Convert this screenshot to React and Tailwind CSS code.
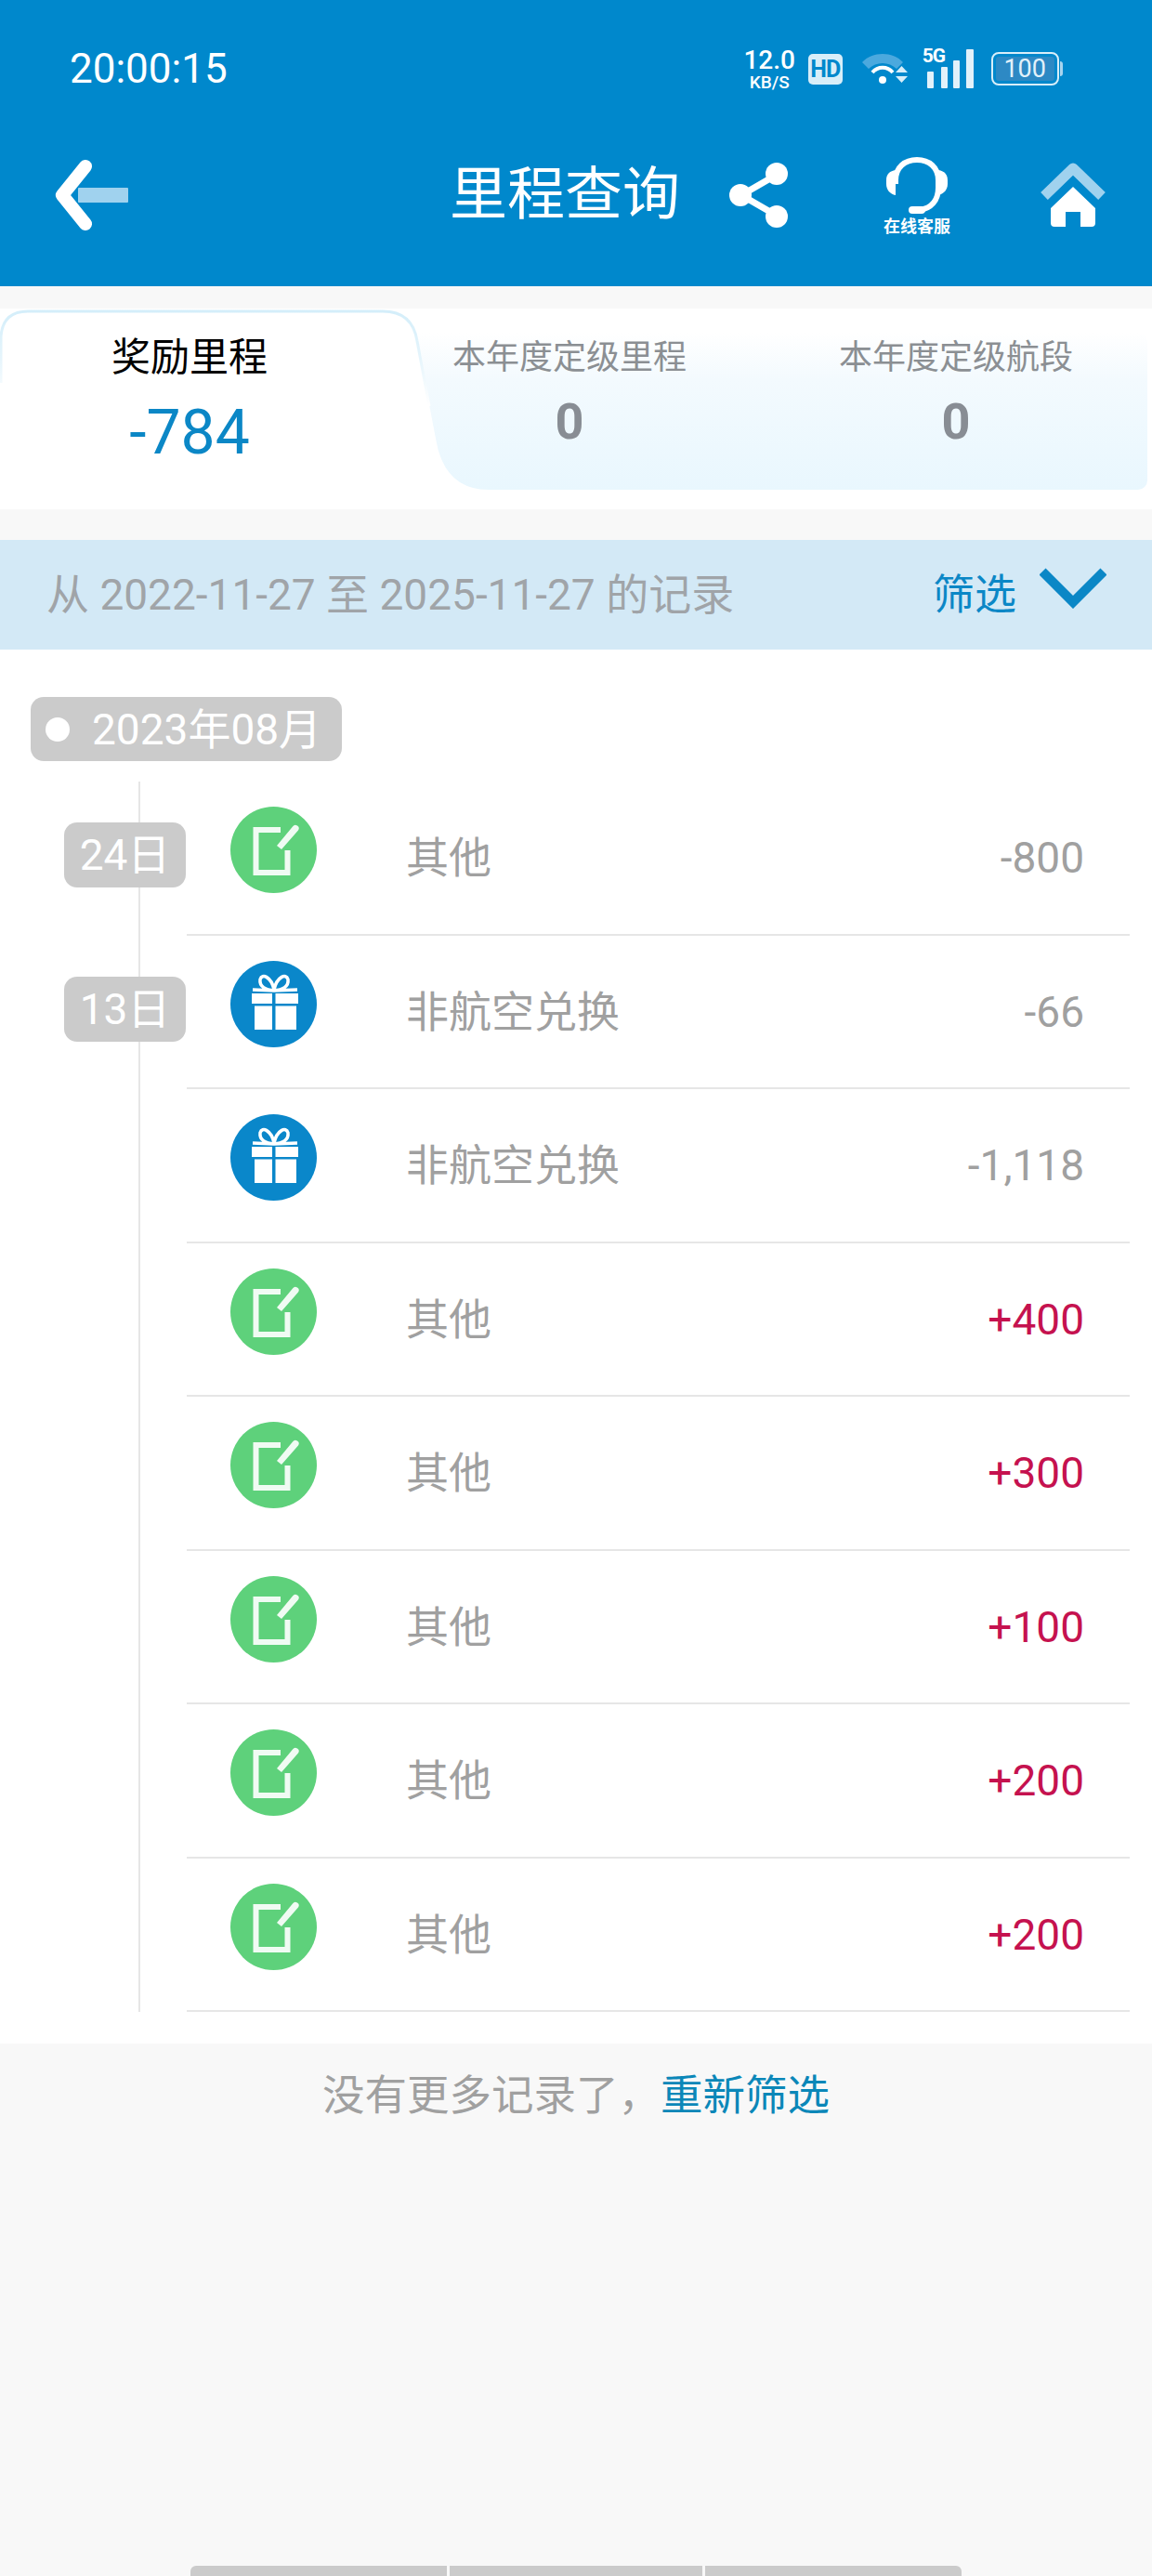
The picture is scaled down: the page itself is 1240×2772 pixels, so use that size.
import React from "react";

const rows = [
  { day: "24日", kind: "note", name: "其他", amount: "-800" },
  { day: "13日", kind: "gift", name: "非航空兑换", amount: "-66" },
  { kind: "gift", name: "非航空兑换", amount: "-1,118" },
  { kind: "note", name: "其他", amount: "+400" },
  { kind: "note", name: "其他", amount: "+300" },
  { kind: "note", name: "其他", amount: "+100" },
  { kind: "note", name: "其他", amount: "+200" },
  { kind: "note", name: "其他", amount: "+200" },
];

function NoteIcon() {
  return (
    <svg width="93" height="93" viewBox="0 0 93 93" className="shrink-0">
      <circle cx="46.5" cy="46.5" r="46.5" fill="#5ed17b" />
      <path d="M54 25H27.5V71H61.5V47" fill="none" stroke="#f0fbf3" strokeWidth="6" />
      <path d="M50 42L67 21.5a3.5 3.5 0 0 1 6 4L55 46Z" fill="#f0fbf3" />
    </svg>
  );
}

function GiftIcon() {
  return (
    <svg width="93" height="93" viewBox="0 0 93 93" className="shrink-0">
      <circle cx="46.5" cy="46.5" r="46.5" fill="#0a87ca" />
      <path d="M23 35H45V46H23ZM48.500 35H73V46H48.500ZM26 48.500H45V74H26ZM48.500 48.500H71V74H48.500Z" fill="#fff" />
      <path d="M47 32C38 31 31 28 32 20C34 13 44 17 47 31C50 17 60 13 62 20C63 28 56 31 47 32ZM47 32L24 31M47 32L72 31" fill="none" stroke="#fff" strokeWidth="3.500" />
    </svg>
  );
}

function Row({ row }) {
  const positive = row.amount.startsWith("+");
  return (
    <div className="flex h-[165.5px]">
      <div className="relative w-[201px] shrink-0">
        <div className="h-full w-[151px] border-r-2 border-[#e6e6e6]" />
        {row.day && (
          <span className="absolute left-[69px] top-[44px] flex h-[70px] w-[131px] items-center justify-center rounded-[14px] bg-[#cbcbcb] text-[46px] leading-none text-white">
            {row.day}
          </span>
        )}
      </div>
      <div className="mr-[24px] flex flex-1 border-b-2 border-[#e6e6e6]">
        <div className="ml-[47px] mt-[27px]">
          {row.kind === "note" ? <NoteIcon /> : <GiftIcon />}
        </div>
        <span className="ml-[96px] mt-[1px] self-center text-[46px] leading-none text-[#a0a0a0]">{row.name}</span>
        <span className={`ml-auto mr-[49px] mt-[1px] self-center text-[46px] leading-none ${positive ? "text-[#c5124f]" : "text-[#a0a0a0]"}`}>
          {row.amount}
        </span>
      </div>
    </div>
  );
}

function StatusBar() {
  return (
    <div className="flex h-[150px] items-center pl-[75px] pb-[2px] text-white">
      <span className="text-[44px] leading-none">20:00:15</span>
      <div className="ml-[557px] flex w-[53px] flex-col items-center font-medium">
        <span className="text-[28px] leading-[28px]">12.0</span>
        <span className="text-[19px] leading-[19px]">KB/S</span>
      </div>
      <span className="ml-[15px] flex h-[33px] w-[37px] items-center justify-center rounded-[5px] bg-[#d8eef9] text-[25px] font-bold leading-none tracking-[-1px] text-[#0088cc]">
        HD
      </span>
      <svg width="52" height="40" viewBox="0 0 52 40" className="ml-[19px]">
        <path d="M2 13C13 1 35 1 46 13L39 20C31 12 17 12 9 20Z" fill="#4ba9de" />
        <path d="M13 24C19 17 29 17 35 24" fill="none" stroke="#fff" strokeWidth="4" />
        <circle cx="24" cy="32" r="4" fill="#fff" />
        <path d="M38 24L44.500 17L51 24ZM38 28H51L44.500 35Z" fill="#d8eef9" />
      </svg>
      <div className="relative ml-[15px] h-[42px] w-[55px]">
        <span className="absolute -top-[3px] left-0 text-[21px] font-bold leading-none tracking-[-1px]">5G</span>
        <svg width="55" height="42" viewBox="0 0 55 42">
          <rect x="5" y="24" width="7" height="18" rx="1" fill="#e2f1fa" />
          <rect x="20" y="19" width="7" height="23" rx="1" fill="#e2f1fa" />
          <rect x="33" y="12" width="7" height="30" rx="1" fill="#e2f1fa" />
          <rect x="47" y="0" width="8" height="42" rx="1" fill="#e2f1fa" />
        </svg>
      </div>
      <div className="ml-[19px] flex items-center">
        <div className="flex h-[36px] w-[73px] items-center justify-center rounded-[8px] border-2 border-[#d8eef9] p-[3px]">
          <span className="flex h-full w-full items-center justify-center rounded-[3px] bg-[#2d89c4] text-[27px] leading-none text-[#e2f1fa]">100</span>
        </div>
        <span className="ml-[1px] h-[16px] w-[3px] rounded-r bg-[#a9d5ee]" />
      </div>
    </div>
  );
}

function NavBar() {
  return (
    <div className="flex h-[158px] items-start pt-[22px] text-white">
      <svg width="80" height="76" viewBox="0 0 80 76" className="ml-[58px] shrink-0">
        <rect x="26" y="30" width="54" height="16" rx="1" fill="#a0d2ee" />
        <path d="M34 7L9 38L34 69" fill="none" stroke="#fff" strokeWidth="14" strokeLinecap="round" strokeLinejoin="round" />
      </svg>
      <span className="ml-[346px] text-[62px] leading-[76px]">里程查询</span>
      <svg width="64" height="70" viewBox="0 0 64 70" className="ml-[53px] mt-[3px] shrink-0">
        <path d="M51 13L13 35L51 57" fill="none" stroke="#fff" strokeWidth="7" />
        <circle cx="51" cy="12" r="12" fill="#fff" />
        <circle cx="12" cy="35" r="12" fill="#fff" />
        <circle cx="51" cy="58" r="12" fill="#fff" />
      </svg>
      <div className="ml-[101px] -mt-[4px] flex w-[74px] shrink-0 flex-col items-center">
        <svg width="70" height="64" viewBox="0 0 70 64">
          <path d="M12 30V26C12 12 22 4 35 4C48 4 58 12 58 26V34C58 48 50 56 38 58" fill="none" stroke="#fff" strokeWidth="6" />
          <path d="M2 26C2 19 6 16 12 15V42C6 41 2 36 2 30ZM68 26C68 19 64 16 58 15V42C64 41 68 36 68 30Z" fill="#fff" />
          <rect x="26" y="54" width="18" height="8" rx="4" fill="#fff" />
        </svg>
        <span className="mt-[1px] whitespace-nowrap text-[18px] font-bold leading-[22px]">在线客服</span>
      </div>
      <svg width="72" height="70" viewBox="0 0 72 70" className="ml-[95px] mt-[3px] shrink-0">
        <path d="M5 36L36 6L67 36" fill="none" stroke="#a0d2ee" strokeWidth="11" strokeLinejoin="round" />
        <path d="M36 26L60 49V65a4 4 0 0 1-4 4H44V53H28V69H16a4 4 0 0 1-4-4V49Z" fill="#fff" />
      </svg>
    </div>
  );
}

function Tabs() {
  return (
    <div className="relative h-[216px] bg-white">
      <svg width="1240" height="216" viewBox="0 0 1240 216" className="absolute inset-0">
        <defs>
          <linearGradient id="tabFill" x1="0" y1="0" x2="0" y2="1">
            <stop offset="0" stopColor="#ffffff" />
            <stop offset="0.3" stopColor="#f3fafe" />
            <stop offset="1" stopColor="#e9f7fe" />
          </linearGradient>
          <linearGradient id="tabEdge" x1="0" y1="0" x2="0" y2="1">
            <stop offset="0" stopColor="#d4eefa" />
            <stop offset="0.5" stopColor="#e6f5fc" />
            <stop offset="1" stopColor="#ffffff" />
          </linearGradient>
        </defs>
        <rect x="300" y="26" width="935" height="169" rx="10" fill="url(#tabFill)" />
        <path d="M0 216V30Q2 3 30 3H412Q444 3 449 35L469 140Q478 195 526 195V216Z" fill="#ffffff" />
        <path d="M1 80V30Q3 3 30 3H412Q444 3 449 35L462 105" fill="none" stroke="url(#tabEdge)" strokeWidth="3" />
      </svg>
      <div className="relative grid h-full grid-cols-[408px_410px_1fr] text-center">
        <div className="flex flex-col items-center pt-[28px]">
          <span className="mt-[2px] text-[42px] leading-[46px] text-black">奖励里程</span>
          <span className="mt-[20px] text-[66px] leading-[76px] text-[#0b87c6]">-784</span>
        </div>
        <div className="flex flex-col items-center pt-[32px]">
          <span className="text-[36px] leading-[42px] text-[#8b8f93]">本年度定级里程</span>
          <span className="mt-[18px] text-[54px] font-bold leading-[60px] text-[#888d94]">0</span>
        </div>
        <div className="flex flex-col items-center pt-[32px]">
          <span className="text-[36px] leading-[42px] text-[#8b8f93]">本年度定级航段</span>
          <span className="mt-[18px] text-[54px] font-bold leading-[60px] text-[#888d94]">0</span>
        </div>
      </div>
    </div>
  );
}

export default function App() {
  return (
    <div className="flex h-[2772px] w-[1240px] flex-col overflow-hidden bg-[#f8f8f8] font-['Roboto','Noto_Sans_CJK_SC',sans-serif]">
      <header className="bg-[#0088cc]">
        <StatusBar />
        <NavBar />
      </header>

      <div className="mt-[24px]">
        <Tabs />
      </div>

      <div className="mt-[33px] flex h-[118px] items-center bg-[#d3e9f6] pl-[50px] text-[46px] leading-none">
        <span className="text-[#a0a4a8]">从 2022-11-27 至 2025-11-27 的记录</span>
        <span className="ml-auto text-[45px] text-[#0b87c6]">筛选</span>
        <svg width="72" height="44" viewBox="0 0 72 44" className="ml-[25px] mr-[49px] -mt-[14px]">
          <path d="M3 4L36 37L69 4" fill="none" stroke="#0b87c6" strokeWidth="10" />
        </svg>
      </div>

      <div className="bg-white pb-[34px]">
        <div className="pl-[33px] pt-[51px] pb-[22px]">
          <div className="flex h-[69px] w-[335px] items-center rounded-[14px] bg-[#cbcbcb] text-[46px] leading-none text-white">
            <span className="ml-[16px] h-[26px] w-[26px] rounded-full bg-white" />
            <span className="ml-[24px]">2023年08月</span>
          </div>
        </div>
        {rows.map((row, i) => (
          <Row key={i} row={row} />
        ))}
      </div>

      <div className="flex flex-1 flex-col items-center">
        <p className="mt-[32px] text-[45.500px] leading-[50px] text-[#a0a0a0]">
          没有更多记录了，<span className="text-[#0b87b8]">重新筛选</span>
        </p>
        <div className="mt-auto flex h-[11px] gap-[3px]">
          <span className="w-[276px] rounded-tl-[6px] bg-[#cbcbcb]" />
          <span className="w-[272px] bg-[#cbcbcb]" />
          <span className="w-[276px] rounded-tr-[6px] bg-[#cbcbcb]" />
        </div>
      </div>
    </div>
  );
}
